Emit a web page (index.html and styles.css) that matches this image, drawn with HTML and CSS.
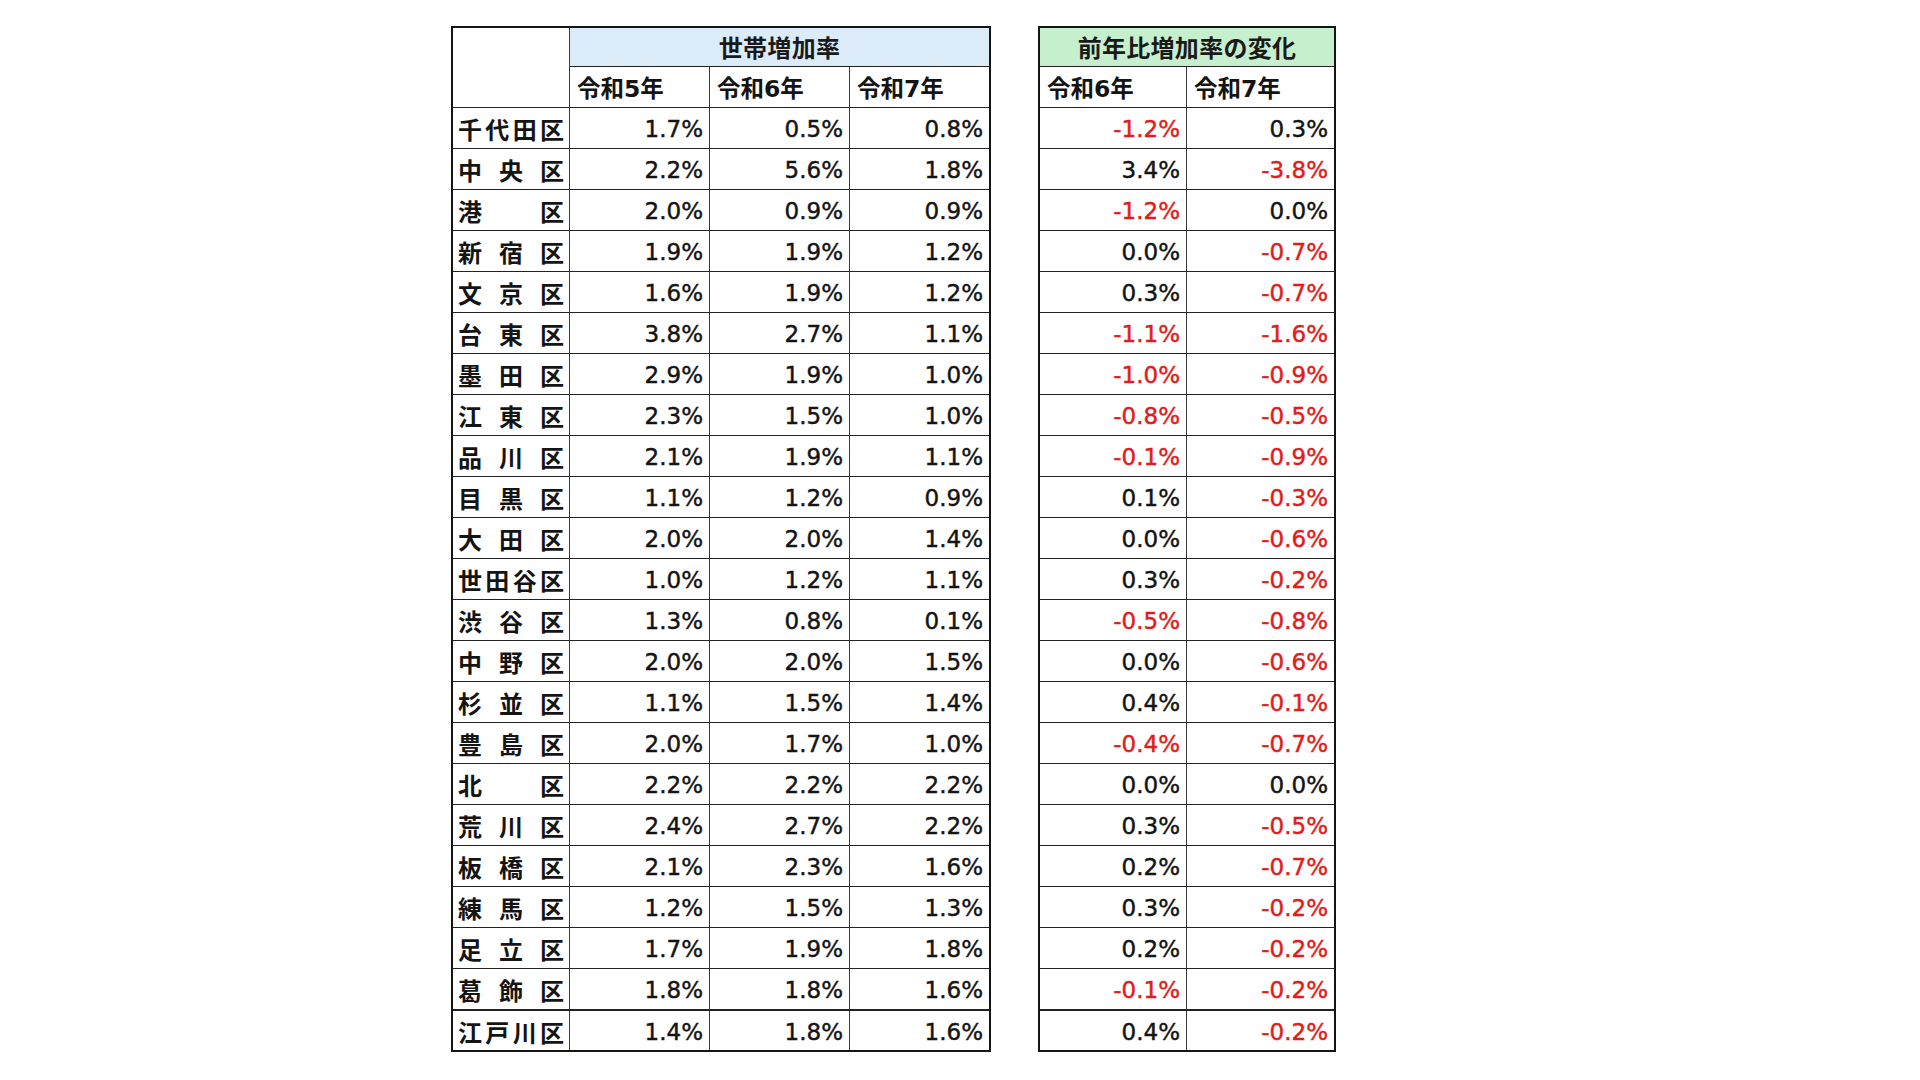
FILE: index.html
```html
<!DOCTYPE html>
<html lang="ja">
<head>
<meta charset="utf-8">
<title>世帯増加率</title>
<link rel="stylesheet" href="styles.css">
</head>
<body>
<div class="page">
  <table class="grid t1">
    <colgroup><col class="c-name"><col class="c-val"><col class="c-val"><col class="c-last"></colgroup>
    <thead>
      <tr class="hrow first"><th class="corner" rowspan="2"></th><th class="title blue endcol" colspan="3">世帯増加率</th></tr>
      <tr class="hrow"><th class="sub">令和5年</th><th class="sub">令和6年</th><th class="sub endcol">令和7年</th></tr>
    </thead>
    <tbody id="b1"></tbody>
  </table>
  <table class="grid t2">
    <colgroup><col class="c-val2"><col class="c-val2"></colgroup>
    <thead>
      <tr class="hrow first"><th class="title green endcol" colspan="2">前年比増加率の変化</th></tr>
      <tr class="hrow"><th class="sub">令和6年</th><th class="sub endcol">令和7年</th></tr>
    </thead>
    <tbody id="b2"></tbody>
  </table>
</div>
<script>
const data = [
 ["千代田区",1.7,0.5,0.8,-1.2,0.3],
 ["中央区",2.2,5.6,1.8,3.4,-3.8],
 ["港区",2.0,0.9,0.9,-1.2,0.0],
 ["新宿区",1.9,1.9,1.2,0.0,-0.7],
 ["文京区",1.6,1.9,1.2,0.3,-0.7],
 ["台東区",3.8,2.7,1.1,-1.1,-1.6],
 ["墨田区",2.9,1.9,1.0,-1.0,-0.9],
 ["江東区",2.3,1.5,1.0,-0.8,-0.5],
 ["品川区",2.1,1.9,1.1,-0.1,-0.9],
 ["目黒区",1.1,1.2,0.9,0.1,-0.3],
 ["大田区",2.0,2.0,1.4,0.0,-0.6],
 ["世田谷区",1.0,1.2,1.1,0.3,-0.2],
 ["渋谷区",1.3,0.8,0.1,-0.5,-0.8],
 ["中野区",2.0,2.0,1.5,0.0,-0.6],
 ["杉並区",1.1,1.5,1.4,0.4,-0.1],
 ["豊島区",2.0,1.7,1.0,-0.4,-0.7],
 ["北区",2.2,2.2,2.2,0.0,0.0],
 ["荒川区",2.4,2.7,2.2,0.3,-0.5],
 ["板橋区",2.1,2.3,1.6,0.2,-0.7],
 ["練馬区",1.2,1.5,1.3,0.3,-0.2],
 ["足立区",1.7,1.9,1.8,0.2,-0.2],
 ["葛飾区",1.8,1.8,1.6,-0.1,-0.2],
 ["江戸川区",1.4,1.8,1.6,0.4,-0.2]
];
const fmt = v => v.toFixed(1) + "%";
const b1 = document.getElementById("b1");
const b2 = document.getElementById("b2");
data.forEach((r, i) => {
  const last = i === data.length - 1 ? ' class="lastrow"' : '';
  const name = [...r[0]].map(c => "<span>" + c + "</span>").join("");
  b1.insertAdjacentHTML("beforeend",
    "<tr" + last + "><td class=\"name\"><div class=\"nm\">" + name + "</div></td>" +
    "<td class=\"num\">" + fmt(r[1]) + "</td><td class=\"num\">" + fmt(r[2]) + "</td><td class=\"num endcol\">" + fmt(r[3]) + "</td></tr>");
  b2.insertAdjacentHTML("beforeend",
    "<tr" + last + "><td class=\"num" + (r[4] < 0 ? " neg" : "") + "\">" + fmt(r[4]) + "</td>" +
    "<td class=\"num endcol" + (r[5] < 0 ? " neg" : "") + "\">" + fmt(r[5]) + "</td></tr>");
});
</script>
</body>
</html>
```
FILE: styles.css
```css
html, body {
  margin: 0;
  padding: 0;
  background: #ffffff;
}

.page {
  display: flex;
  align-items: flex-start;
  gap: 47px;
  padding: 26px 0 0 451px;
  font-family: "DejaVu Sans", "Noto Sans CJK JP", sans-serif;
  color: #141414;
}

.grid {
  border-collapse: separate;
  border-spacing: 0;
  table-layout: fixed;
  border: 2px solid #151515;
}

.t1 { width: 540px; }
.t2 { width: 298px; }

.c-name { width: 117px; }
.c-val { width: 140px; }
.c-last { width: 139px; }
.c-val2 { width: 147px; }

.grid th,
.grid td {
  height: 41px;
  padding: 0;
  border-right: 1px solid #3a3a3a;
  border-bottom: 1px solid #222;
  box-sizing: border-box;
  font-size: 21px;
  line-height: 24px;
  vertical-align: middle;
}

.grid .endcol { border-right: none; }

.grid .first th { height: 39px; }

.grid tbody tr:last-child td {
  height: 40px;
  border-bottom: none;
  border-top: 1px solid #222;
}

.grid .corner { background: #fff; }

.grid .title {
  text-align: center;
  font-family: "Noto Sans CJK JP", sans-serif;
  font-size: 24px;
  font-weight: 700;
  letter-spacing: 0.3px;
  color: #1a1a1a;
}

.blue { background: #dcebf8; }
.green { background: #c6efce; }

.grid .sub {
  text-align: left;
  padding-left: 7px;
  padding-top: 3px;
  font-size: 23.5px;
  font-weight: 700;
  font-family: "DejaVu Sans", "Noto Sans CJK JP", sans-serif;
}

.grid .name { padding: 2px 5px 0 5px; }

.nm {
  display: flex;
  justify-content: space-between;
  font-family: "Noto Sans CJK JP", sans-serif;
  font-size: 24px;
  font-weight: 700;
}

.grid .num {
  text-align: right;
  padding-right: 6px;
  padding-top: 2px;
  font-size: 23px;
  font-weight: 400;
  -webkit-text-stroke: 0.45px currentColor;
}

.grid .neg { color: #e31b1b; }
```
